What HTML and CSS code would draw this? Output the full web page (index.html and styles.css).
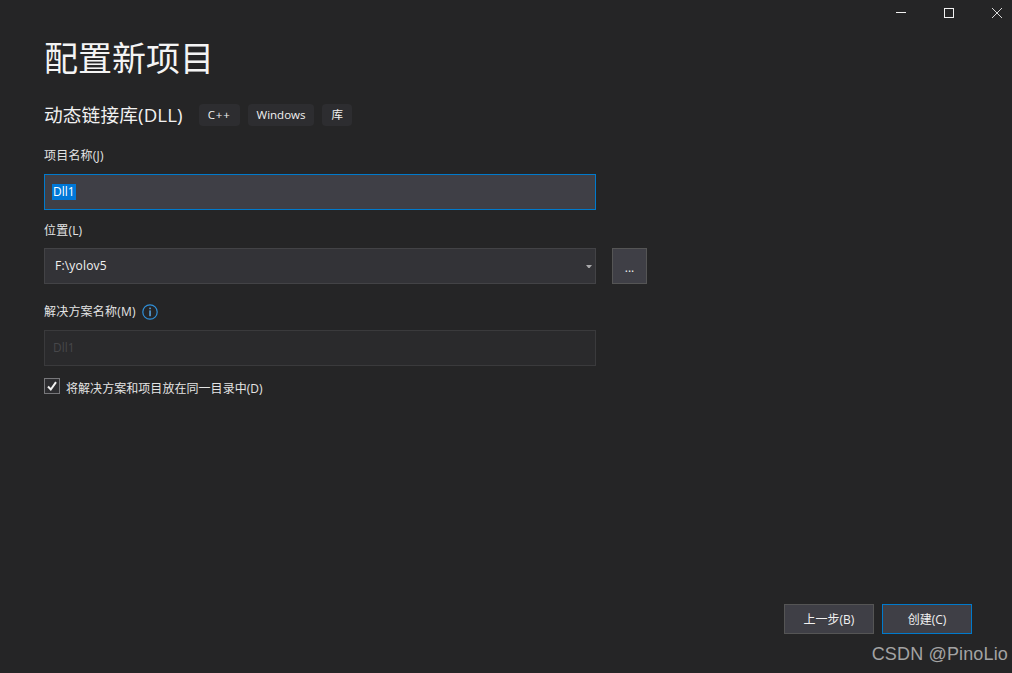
FILE: index.html
```html
<!DOCTYPE html>
<html lang="zh-CN">
<head>
<meta charset="utf-8">
<title>配置新项目</title>
<link rel="stylesheet" href="styles.css">
</head>
<body>
<div class="window">
  <div class="titlebar">
    <svg class="ctl" width="48" height="24" viewBox="0 0 48 24"><path d="M16 12.5H26" stroke="#f1f1f1" stroke-width="1"/></svg>
    <svg class="ctl" width="48" height="24" viewBox="0 0 48 24"><rect x="16.5" y="8.5" width="9" height="9" fill="none" stroke="#f1f1f1" stroke-width="1"/></svg>
    <svg class="ctl" width="36" height="24" viewBox="0 0 36 24"><path d="M16 8L26 18M26 8L16 18" stroke="#d8d8d8" stroke-width="1"/></svg>
  </div>
  <main class="content">
    <h1 class="title">配置新项目</h1>
    <div class="subtitle-row">
      <h2 class="subtitle">动态链接库(DLL)</h2>
      <span class="tag tag-lang">C++</span>
      <span class="tag">Windows</span>
      <span class="tag">库</span>
    </div>
    <label class="label label-name">项目名称(J)</label>
    <div class="field field-focus"><span class="selected">Dll1</span></div>
    <label class="label label-loc">位置(L)</label>
    <div class="loc-row">
      <div class="field field-combo">
        <span class="combo-text">F:\yolov5</span>
        <svg class="caret" width="6" height="3" viewBox="0 0 6 3"><path d="M0 0H6L3.6 3H2.4Z" fill="#a9a9ab"/></svg>
      </div>
      <button class="browse">...</button>
    </div>
    <div class="label-info">
      <label class="label">解决方案名称(M)</label>
      <svg class="info" width="16" height="16" viewBox="0 0 16 16"><circle cx="8" cy="8" r="7.2" fill="none" stroke="#2f8fd8" stroke-width="1.2"/><rect x="7.3" y="3.6" width="1.5" height="1.6" fill="#5aa9e6"/><rect x="7.3" y="6.4" width="1.5" height="5.8" fill="#5aa9e6"/></svg>
    </div>
    <div class="field field-disabled"><span class="disabled-text">Dll1</span></div>
    <div class="check-row">
      <span class="checkbox"><svg width="14" height="14" viewBox="0 0 14 14"><path d="M3 7.5L5.8 10.5L11 3.2" fill="none" stroke="#f1f1f1" stroke-width="2"/></svg></span>
      <span class="check-label">将解决方案和项目放在同一目录中(D)</span>
    </div>
    <div class="actions">
      <button class="btn">上一步(B)</button>
      <button class="btn btn-primary">创建(C)</button>
    </div>
  </main>
  <div class="watermark">CSDN @PinoLio</div>
</div>
</body>
</html>
```
FILE: styles.css
```css
* { box-sizing: border-box; }
html, body { margin: 0; padding: 0; }
body {
  width: 1012px;
  height: 673px;
  overflow: hidden;
  background: #252526;
  color: #f1f1f1;
  font-family: "Open Sans", "Noto Sans CJK SC", sans-serif;
  font-size: 12px;
}
.window {
  position: relative;
  height: 673px;
  display: flex;
  flex-direction: column;
}
.titlebar {
  display: flex;
  justify-content: flex-end;
  height: 24px;
  flex: none;
}
.ctl { display: block; }
.content {
  flex: 1;
  display: flex;
  flex-direction: column;
  padding: 0 40px 39px 44px;
  min-height: 0;
}
.title {
  margin: 10px 0 0;
  font-size: 34px;
  line-height: 48px;
  font-weight: 400;
  color: #f4f4f4;
}
.subtitle-row {
  display: flex;
  align-items: center;
  margin-top: 21px;
  height: 24px;
}
.subtitle {
  margin: 0 16px 0 0;
  font-size: 18.7px;
  line-height: 24px;
  font-weight: 400;
  letter-spacing: 0.12px;
  white-space: nowrap;
}
.tag {
  display: flex;
  align-items: center;
  height: 22px;
  padding: 0 9px 2px;
  margin-right: 8px;
  border-radius: 4px;
  background: #2d2d30;
  font-size: 11.5px;
  color: #f1f1f1;
}
.tag-lang { letter-spacing: 0.8px; }
.label {
  display: block;
  font-size: 12px;
  line-height: 16px;
  letter-spacing: 0.2px;
  color: #e4e4e4;
}
.label-name { margin-top: 21px; }
.label-loc { margin-top: 13px; }
.field {
  width: 552px;
  height: 36px;
  display: flex;
  align-items: center;
  font-size: 12px;
}
.field-focus {
  margin-top: 10px;
  padding-left: 7px;
  background: #3f3f46;
  border: 1px solid #007acc;
}
.selected {
  background: #0078d7;
  color: #ffffff;
  line-height: 16px;
  padding: 0 1px;
}
.loc-row {
  display: flex;
  gap: 16px;
  margin-top: 9px;
}
.field-combo {
  justify-content: space-between;
  padding: 0 3px 0 10px;
  background: #333337;
  border: 1px solid #434346;
}
.combo-text { color: #f1f1f1; position: relative; top: -1px; letter-spacing: 0.2px; }
.caret { display: block; }
.browse {
  width: 35px;
  height: 36px;
  padding: 3px 0 0;
  background: #3f3f46;
  border: 1px solid #555555;
  color: #f1f1f1;
  font: inherit;
}
.label-info {
  display: flex;
  align-items: center;
  gap: 6px;
  height: 16px;
  margin-top: 20px;
}
.info { display: block; }
.field-disabled {
  margin-top: 10px;
  padding-left: 8px;
  background: #2a2a2c;
  border: 1px solid #3a3a3c;
  color: #47474a;
}
.disabled-text { position: relative; top: -1px; }
.check-row {
  display: flex;
  align-items: center;
  gap: 6px;
  margin-top: 12px;
  height: 16px;
}
.checkbox {
  width: 16px;
  height: 16px;
  display: flex;
  align-items: center;
  justify-content: center;
  background: #2d2d30;
  border: 1px solid #77777a;
}
.check-label { color: #e4e4e4; padding-top: 4px; letter-spacing: 0.05px; }
.actions {
  display: flex;
  justify-content: flex-end;
  gap: 8px;
  margin-top: auto;
}
.btn {
  width: 90px;
  height: 30px;
  padding: 0;
  background: #3f3f46;
  border: 1px solid #555555;
  color: #f1f1f1;
  font: inherit;
}
.btn-primary { border-color: #007acc; }
.watermark {
  position: absolute;
  right: 4px;
  top: 643px;
  font-family: "Liberation Sans", sans-serif;
  font-size: 18px;
  line-height: 22px;
  color: #a3a3a3;
  letter-spacing: 0.15px;
}
```
